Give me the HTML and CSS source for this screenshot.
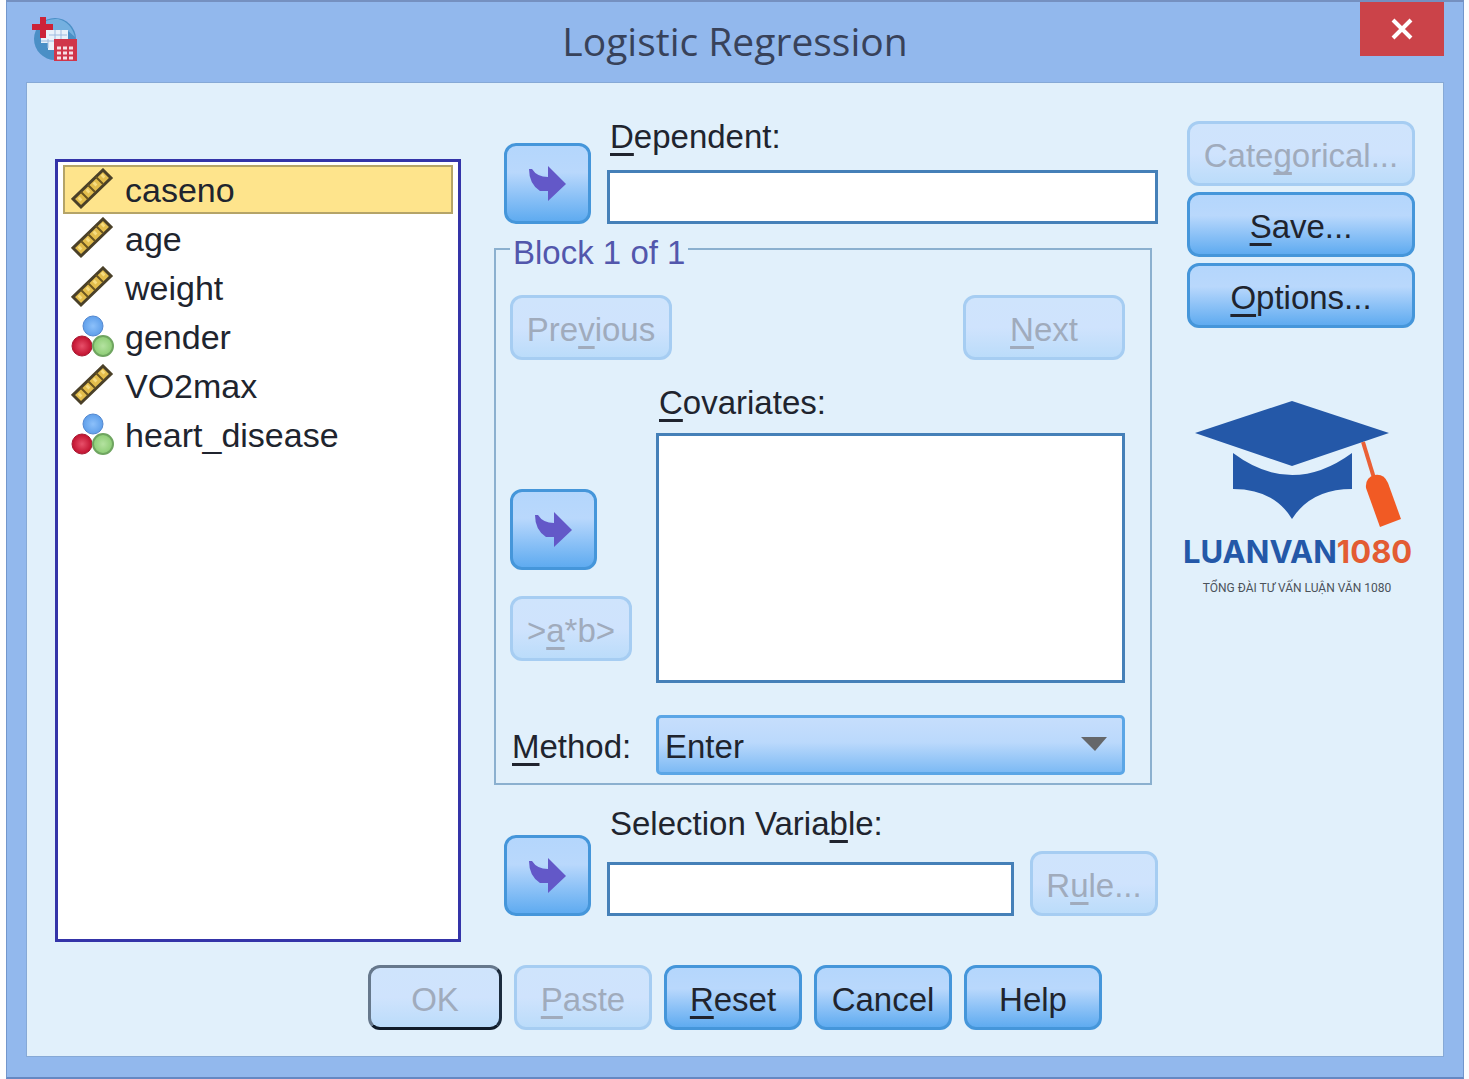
FILE: index.html
```html
<!DOCTYPE html>
<html lang="en">
<head>
  <meta charset="UTF-8">
  <meta name="viewport" content="width=device-width, initial-scale=1.0">
  <title>Logistic Regression</title>
  <link rel="stylesheet" href="styles.css">
</head>
<body>
  <svg class="symbols" aria-hidden="true">
    <defs>
      <radialGradient id="red"><stop offset="0" stop-color="#e8506a"/><stop offset="1" stop-color="#c0102e"/></radialGradient>
      <radialGradient id="blue"><stop offset="0" stop-color="#8cc0fa"/><stop offset="1" stop-color="#5f9fea"/></radialGradient>
      <radialGradient id="green"><stop offset="0" stop-color="#b4e2a0"/><stop offset="1" stop-color="#8ccc74"/></radialGradient>
    </defs>
    <symbol id="scale" viewBox="0 0 44 44">
      <path d="M32 2 40 10 10 39 2 31Z" fill="#e3bd4c" stroke="#4a4028" stroke-width="3"/>
      <path d="M10 24l7 7M17 17l7 7M25 9l7 7" stroke="#6b5620" stroke-width="2"/>
      <path d="M8 32l2-2M16 24l2-2M23 17l2-2M31 9l2-2" stroke="#f6dc80" stroke-width="4"/>
    </symbol>
    <symbol id="nominal" viewBox="0 0 44 44">
      <circle cx="22" cy="11" r="10" fill="url(#blue)" stroke="#5388d0"/>
      <circle cx="11" cy="31" r="10" fill="url(#red)" stroke="#a81c34"/>
      <circle cx="32" cy="31" r="10" fill="url(#green)" stroke="#6fa560" stroke-width="2"/>
    </symbol>
    <symbol id="move" viewBox="0 0 40 36">
      <path d="M1 3H4Q9 11 20 11V0L38 18 20 35V25H12Q1 18 1 3Z" fill="#6358c8"/>
    </symbol>
  </svg>

  <div class="window">
    <header class="titlebar">
      <svg class="app-icon" viewBox="0 0 48 48" aria-hidden="true">
        <circle cx="24" cy="24" r="21" fill="#4a8fc6"/>
        <path d="M10 10Q16 3 27 4Q40 7 44 22L36 15H14Z" fill="#74b0e0"/>
        <path d="M10 15h27v9H23v11H17V28H10Z" fill="#e9f1fa"/>
        <path d="M18 20h18M10 26h13M24 15v9M30 15v9M17 24v9" stroke="#9dbbe0" stroke-width="1"/>
        <path d="M12 2v21M1 12h21" stroke="#cc2338" stroke-width="6"/>
        <path d="M23 24h23v22H23Z" fill="#d0354a"/>
        <path d="M26 33h18M26 38h18M26 43h18" stroke="#f6dfe6" stroke-width="3" stroke-dasharray="4 2"/>
      </svg>
      <h1>Logistic Regression</h1>
      <button class="close" type="button" aria-label="Close">
        <svg viewBox="0 0 24 22" aria-hidden="true"><path d="M3 2 21 20M21 2 3 20" stroke="#fff" stroke-width="4"/></svg>
      </button>
    </header>

    <main class="panel">
      <div class="columns">
        <ul class="variables" role="listbox" aria-label="Variables">
          <li class="active" role="option" aria-selected="true"><svg><use href="#scale"/></svg>caseno</li>
          <li role="option"><svg><use href="#scale"/></svg>age</li>
          <li role="option"><svg><use href="#scale"/></svg>weight</li>
          <li role="option"><svg><use href="#nominal"/></svg>gender</li>
          <li role="option"><svg><use href="#scale"/></svg>VO2max</li>
          <li role="option"><svg><use href="#nominal"/></svg>heart_disease</li>
        </ul>

        <div class="model">
          <div class="row">
            <button class="btn btn-move" type="button" aria-label="Move to Dependent"><svg><use href="#move"/></svg></button>
            <div class="field">
              <label for="dependent"><u>D</u>ependent:</label>
              <input class="box" id="dependent" type="text">
            </div>
          </div>

          <fieldset class="block">
            <legend>Block 1 of 1</legend>
            <div class="pager">
              <button class="btn" type="button" disabled>Pre<u>v</u>ious</button>
              <button class="btn" type="button" disabled><u>N</u>ext</button>
            </div>
            <div class="block-grid">
              <div class="moves">
                <button class="btn btn-move" type="button" aria-label="Move to Covariates"><svg><use href="#move"/></svg></button>
                <button class="btn" type="button" disabled>&gt;<u>a</u>*b&gt;</button>
              </div>
              <div class="field">
                <label for="covariates"><u>C</u>ovariates:</label>
                <select class="box covariates" id="covariates" multiple></select>
              </div>
              <label for="method"><u>M</u>ethod:</label>
              <div class="dropdown">
                <select id="method">
                  <option>Enter</option>
                </select>
                <svg viewBox="0 0 26 14" aria-hidden="true"><path d="M0 0H26L14 14Z" fill="#65676a"/></svg>
              </div>
            </div>
          </fieldset>

          <div class="row selection">
            <button class="btn btn-move" type="button" aria-label="Move to Selection Variable"><svg><use href="#move"/></svg></button>
            <div class="field">
              <label for="selection">Selection Varia<u>b</u>le:</label>
              <input class="box" id="selection" type="text">
            </div>
            <button class="btn btn-rule" type="button" disabled>R<u>u</u>le...</button>
          </div>
        </div>

        <aside class="side">
          <button class="btn" type="button" disabled>Cate<u>g</u>orical...</button>
          <button class="btn" type="button"><u>S</u>ave...</button>
          <button class="btn" type="button"><u>O</u>ptions...</button>
          <div class="logo">
            <svg viewBox="-4 0 228 128" aria-hidden="true">
              <path d="M8 33 105 1 202 33 105 66Z" fill="#2458a8"/>
              <path d="M46 53Q105 97 165 53V89Q124 89 105 119Q87 89 46 89Z" fill="#2458a8"/>
              <path d="M176 42 187 78" stroke="#ea5f35" stroke-width="4"/>
              <path d="M193 127 179 88Q178 78 187 75Q197 73 201 83L214 119Z" fill="#f15a24"/>
            </svg>
            <p class="brand">LUANVAN<span>1080</span></p>
            <p class="tagline">TỔNG ĐÀI TƯ VẤN LUẬN VĂN 1080</p>
          </div>
        </aside>
      </div>

      <footer class="actions">
        <button class="btn btn-default" type="button" disabled>OK</button>
        <button class="btn" type="button" disabled><u>P</u>aste</button>
        <button class="btn" type="button"><u>R</u>eset</button>
        <button class="btn" type="button">Cancel</button>
        <button class="btn" type="button">Help</button>
      </footer>
    </main>
  </div>
</body>
</html>
```
FILE: styles.css
```css
* {
  box-sizing: border-box;
}
body {
  margin: 0;
  background: #fdfdfe;
  color: #20242e;
  font: 33px/32px "Liberation Sans", Arial, sans-serif;
}
button, input, select {
  margin: 0;
  font: inherit;
  color: inherit;
}
u {
  text-decoration-thickness: 3px;
  text-underline-offset: 5px;
  text-decoration-skip-ink: none;
}
.symbols {
  position: absolute;
  width: 0;
  height: 0;
}

/* window frame */
.window {
  display: flex;
  flex-direction: column;
  min-height: 100vh;
  margin: 0 5px 0 6px;
  padding: 0 19px 20px;
  border: 1px solid #7296cc;
  border-top: 2px solid #7590c0;
  border-bottom: 2px solid #6688c2;
  background: #92b8ed;
}
.titlebar {
  display: grid;
  grid-template-columns: 1fr auto 1fr;
  height: 80px;
}
.titlebar h1 {
  margin: 0;
  color: #38425a;
  font: 39px/78px "Open Sans", "Noto Sans", sans-serif;
}
.app-icon {
  width: 48px;
  height: 48px;
  margin: 13px 0 0 5px;
}
.close {
  justify-self: end;
  display: flex;
  justify-content: center;
  align-items: center;
  width: 84px;
  height: 54px;
  padding: 0;
  border: none;
  background: #cb4349;
}
.close svg {
  width: 24px;
  height: 22px;
}
.panel {
  flex: 1;
  display: flex;
  flex-direction: column;
  padding: 38px 28px 26px;
  border: 1px solid #86a9d6;
  background: #e1f0fb;
}
.columns {
  flex: 1;
  display: grid;
  grid-template-columns: minmax(0, 406fr) minmax(0, 668fr) 228px;
  gap: 29px;
}

/* buttons */
.btn {
  width: 138px;
  height: 65px;
  padding: 4px 0 0;
  border: 3px solid #4596da;
  border-radius: 12px;
  background: linear-gradient(#b4d6fc, #b9d8fc 35%, #8fc3f7 65%, #5fabf0);
  white-space: nowrap;
}
.btn:disabled {
  border-color: #a6cdf2;
  background: linear-gradient(#cfe4fc, #cfe3fd 50%, #bbdcfa);
  color: #a0abbc;
}
.btn-default {
  width: 134px;
}
.btn-default:disabled {
  border-color: #66788c #1c2c3e #101c2a #66788c;
}
.btn-move {
  flex: none;
  width: 87px;
  height: 81px;
  padding: 0;
}
.btn-move svg {
  display: block;
  width: 40px;
  height: 36px;
  margin: 0 auto;
}

/* variable list */
.variables {
  margin: 38px 0 0;
  padding: 3px 5px;
  border: 3px solid #3434a8;
  background: #fff;
  list-style: none;
  font-size: 34px;
}
.variables li {
  display: flex;
  align-items: center;
  gap: 10px;
  height: 49px;
  padding: 0 7px;
  border: 1px solid transparent;
}
.variables li.active {
  border: 2px solid #b5a468;
  padding: 0 6px;
  background: #fee48c;
}
.variables svg {
  width: 44px;
  height: 44px;
}

/* fields */
.model {
  padding-left: 4px;
}
.row {
  display: flex;
  align-items: flex-end;
  gap: 16px;
  padding-left: 10px;
}
.field {
  flex: 1;
  min-width: 0;
  display: flex;
  flex-direction: column;
}
.field label {
  margin: 0 3px 17px;
}
.box {
  width: 100%;
  height: 54px;
  padding: 0 8px;
  border: 3px solid #4580b8;
  border-radius: 0;
  background: #fff;
}
.selection {
  margin-top: 23px;
}
.selection label {
  margin-bottom: 22px;
}
.btn-rule {
  width: 128px;
}

.block {
  min-width: 0;
  margin: 5px 6px 0 0;
  padding: 26px 25px 8px 14px;
  border: 2px solid #8bb0cf;
}
.block legend {
  padding: 8px 3px 0;
  color: #5257ac;
}
.pager {
  display: flex;
  justify-content: space-between;
}
.pager .btn {
  width: 162px;
}
.block-grid {
  display: grid;
  grid-template-columns: 122px minmax(0, 1fr);
  align-items: center;
  gap: 32px 24px;
  margin-top: 27px;
}
.block-grid > label {
  padding: 4px 0 0 2px;
}
.block-grid .field label {
  margin-bottom: 14px;
}
.moves {
  align-self: end;
  display: flex;
  flex-direction: column;
  gap: 26px;
  padding-bottom: 22px;
}
.moves .btn:last-child {
  width: 100%;
}
.covariates {
  height: 250px;
}
.dropdown {
  position: relative;
}
.dropdown select {
  display: block;
  width: 100%;
  height: 60px;
  padding: 4px 6px 0;
  border: 3px solid #5ba6e6;
  border-radius: 5px;
  background: linear-gradient(#c6defc, #bbd9fc 45%, #7dbaf4);
  appearance: none;
}
.dropdown svg {
  position: absolute;
  top: 22px;
  right: 18px;
  width: 26px;
  height: 14px;
  pointer-events: none;
}

/* right side */
.side {
  display: flex;
  flex-direction: column;
  gap: 6px;
}
.side .btn {
  width: 100%;
}
.logo {
  margin: 66px 4px 0 -4px;
}
.logo svg {
  display: block;
  width: 100%;
}
.logo p {
  margin: 0;
  text-align: center;
  white-space: nowrap;
}
.logo .brand {
  color: #2458a8;
  font: 700 31px/48px Inter, sans-serif;
}
.brand span {
  color: #e35c33;
}
.logo .tagline {
  color: #4b525a;
  font: 12px/24px Roboto, "Noto Sans", sans-serif;
}

.actions {
  display: flex;
  justify-content: center;
  gap: 12px;
  margin-top: 23px;
}
```
